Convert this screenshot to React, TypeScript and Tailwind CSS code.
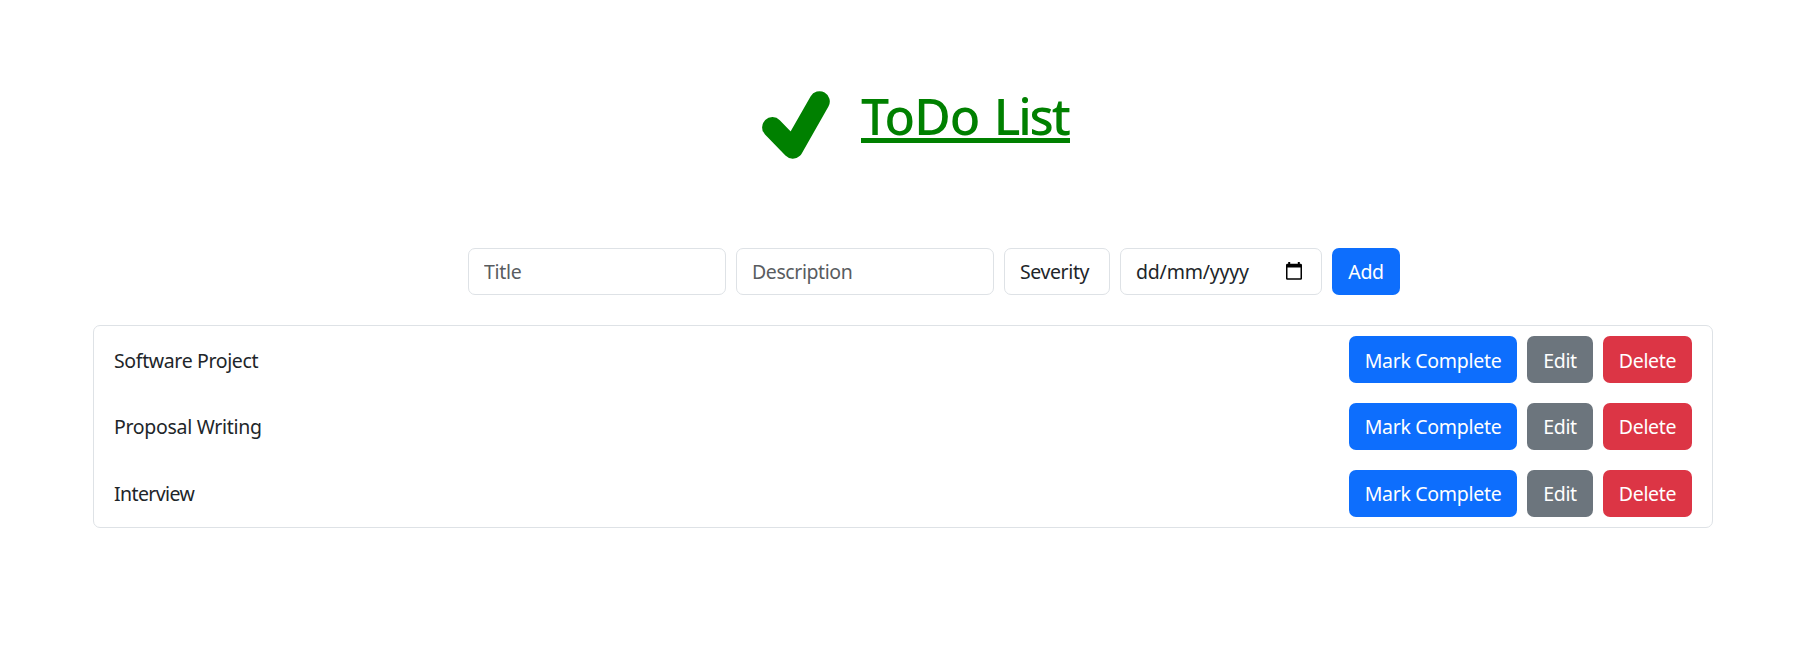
const tasks = [
  { title: "Software Project", style: "tracking-[-0.36px] pt-[2px]" },
  { title: "Proposal Writing", style: "tracking-[-0.3px]" },
  { title: "Interview", style: "tracking-[-0.6px]" },
];

const field = "h-[47px] rounded-[7px] border border-[#dee2e6] bg-white px-[15px] text-[19.5px] text-[#212529]";
const button = "flex h-[47px] items-center justify-center rounded-[7px] text-[19.5px] tracking-[-0.3px] text-white whitespace-nowrap";

function CheckIcon() {
  return (
    <svg className="h-[68px] w-[68px]" viewBox="762 91 68 68" fill="none" stroke="#008000" strokeWidth="20.6" strokeLinecap="round" strokeLinejoin="round">
      <path d="M772.4 127.4 792.8 148.4 819.5 101.5" />
    </svg>
  );
}

function CalendarIcon() {
  return (
    <svg className="h-[18px] w-4" viewBox="0 0 16 18" fill="#000">
      <path fillRule="evenodd" d="M2.2 0H4.2V1.8H11.8V0H13.8V1.8H14.6Q16 1.8 16 3.2V16.4Q16 17.8 14.6 17.8H1.4Q0 17.8 0 16.4V3.2Q0 1.8 1.4 1.8H2.2ZM1.5 5.5V16.3H14.5V5.5Z" />
    </svg>
  );
}

export default function App() {
  return (
    <main className="min-h-[650px] bg-white pl-[93px] pr-[104px] pt-[91px] font-['Noto_Sans',sans-serif] text-[#212529]">
      <header className="flex h-[68px] pl-[669px]">
        <CheckIcon />
        <h1 className="ml-[31px] flex flex-col text-[50px] font-medium leading-[50px] text-[#008000] whitespace-nowrap">
          <span className="h-[47px] w-[209px] tracking-[-1px] [word-spacing:2.5px]">
            ToDo <span className="tracking-[-2.2px]">List</span>
          </span>
          <span className="h-[5px] w-[209px] bg-[#008000]" />
        </h1>
      </header>

      <form className="mt-[89px] flex gap-[10px] pl-[375px]">
        <input className={`${field} w-[258px] pb-px tracking-[-0.3px] placeholder:text-[#595c5f]`} placeholder="Title" />
        <input className={`${field} w-[258px] pb-px tracking-[-0.42px] placeholder:text-[#595c5f]`} placeholder="Description" />
        <div className={`${field} flex w-[106px] items-center pt-px tracking-[-0.4px]`}>Severity</div>
        <div className={`${field} flex w-[202px] items-center justify-between pr-[19px] pt-px tracking-[-0.2px]`}>
          <span>dd/mm/yyyy</span>
          <span className="pb-[3px]"><CalendarIcon /></span>
        </div>
        <button type="button" className={`${button} w-[68px] bg-[#0d6efd]`}>Add</button>
      </form>

      <ul className="mt-[30px] rounded-[7px] border border-[#dee2e6]">
        {tasks.map((task, index) => (
          <li key={task.title} className="flex h-[67px] items-center justify-between px-5">
            <span className={`text-[19.5px] ${task.style}`}>{task.title}</span>
            <div className="flex gap-[10px]">
              <button className={`${button} w-[168px] bg-[#0d6efd] ${index === 0 ? "pt-[2px]" : ""}`}>Mark Complete</button>
              <button className={`${button} w-[66px] bg-[#6c757d] ${index === 0 ? "pt-[2px]" : ""}`}>Edit</button>
              <button className={`${button} w-[89px] bg-[#dc3545] ${index === 0 ? "pt-[2px]" : ""}`}>Delete</button>
            </div>
          </li>
        ))}
      </ul>
    </main>
  );
}
